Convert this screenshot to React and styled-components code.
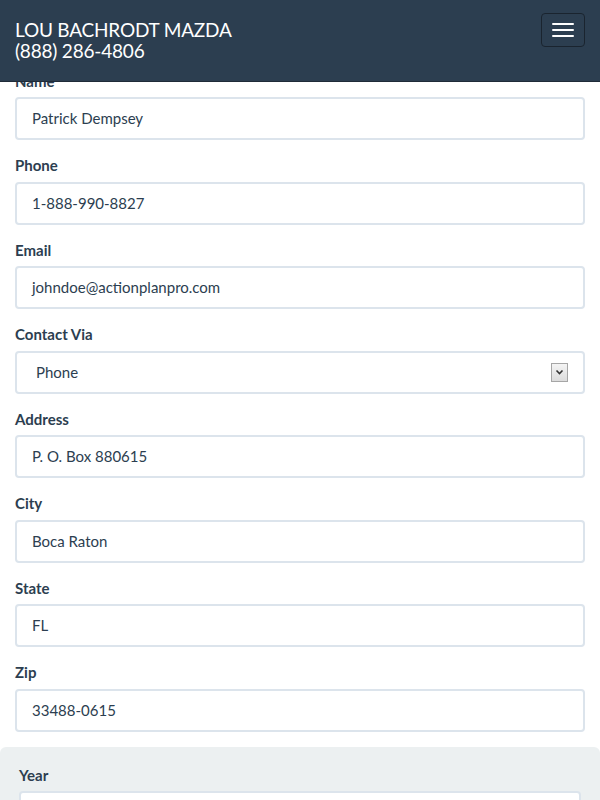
import React from 'react';
import styled, { createGlobalStyle } from 'styled-components';

const GlobalStyle = createGlobalStyle`
  html, body {
    margin: 0;
    padding: 0;
    background: #ffffff;
    font-family: Lato, "Open Sans", "Liberation Sans", sans-serif;
    color: #2c3e50;
  }
  * { box-sizing: border-box; }
`;

const fields = [
  { label: 'Name', value: 'Patrick Dempsey' },
  { label: 'Phone', value: '1-888-990-8827' },
  { label: 'Email', value: 'johndoe@actionplanpro.com' },
  { label: 'Contact Via', value: 'Phone', select: true },
  { label: 'Address', value: 'P. O. Box 880615' },
  { label: 'City', value: 'Boca Raton' },
  { label: 'State', value: 'FL' },
  { label: 'Zip', value: '33488-0615' },
];

export default function App() {
  return (
    <>
      <GlobalStyle />
      <Navbar>
        <Brand>
          <span>LOU BACHRODT MAZDA</span>
          <span>(888) 286-4806</span>
        </Brand>
        <Toggle>
          <Bar />
          <Bar />
          <Bar />
        </Toggle>
      </Navbar>
      <Form>
        {fields.map((f) => (
          <Group key={f.label}>
            <Label>{f.label}</Label>
            {f.select ? (
              <SelectBox>
                <span>{f.value}</span>
                <Arrow>
                  <svg width="9" height="6" viewBox="0 0 9 6">
                    <path d="M1.5 1.5 L4.5 4.5 L7.5 1.5" fill="none" stroke="#333" strokeWidth="1.6" />
                  </svg>
                </Arrow>
              </SelectBox>
            ) : (
              <Input>{f.value}</Input>
            )}
          </Group>
        ))}
      </Form>
      <Panel>
        <Label>Year</Label>
        <Input />
      </Panel>
    </>
  );
}

const Navbar = styled.header`
  position: fixed;
  top: 0;
  left: 0;
  right: 0;
  z-index: 10;
  height: 82px;
  background: #2c3e50;
  border-bottom: 1px solid #1f2b38;
  display: flex;
  align-items: flex-start;
  justify-content: space-between;
  padding: 19px 15px 0 15px;
`;

const Brand = styled.div`
  display: flex;
  flex-direction: column;
  gap: 0;
  color: #ffffff;
  font-size: 19px;
  line-height: 21px;
  letter-spacing: -0.2px;
`;

const Toggle = styled.div`
  width: 44px;
  height: 34px;
  margin-top: -6px;
  border: 1px solid #1a242f;
  border-radius: 4px;
  display: flex;
  flex-direction: column;
  align-items: center;
  justify-content: center;
  gap: 4px;
`;

const Bar = styled.span`
  display: block;
  width: 22px;
  height: 2px;
  background: #ffffff;
  border-radius: 1px;
`;

const Form = styled.div`
  padding: 70.5px 15px 0 15px;
`;

const Group = styled.div`
  margin-bottom: 15px;
`;

const Label = styled.div`
  font-size: 15px;
  font-weight: 700;
  line-height: 21.5px;
  margin-bottom: 5px;
  color: #2c3e50;
`;

const Input = styled.div`
  height: 43px;
  border: 2px solid #dce4ec;
  border-radius: 4px;
  background: #ffffff;
  padding: 0 15px 1px 15px;
  display: flex;
  align-items: center;
  font-size: 15px;
  color: #2c3e50;
`;

const SelectBox = styled(Input)`
  justify-content: space-between;
  padding: 0 15px 0 19px;
`;

const Arrow = styled.span`
  width: 17px;
  height: 19px;
  border: 1px solid #a6a6a6;
  background: linear-gradient(#f4f4f4, #dcdcdc);
  display: flex;
  align-items: center;
  justify-content: center;
`;

const Panel = styled.div`
  background: #ecf0f1;
  border-radius: 6px 6px 0 0;
  padding: 18px 19px 20px 19px;
  height: 120px;
`;
